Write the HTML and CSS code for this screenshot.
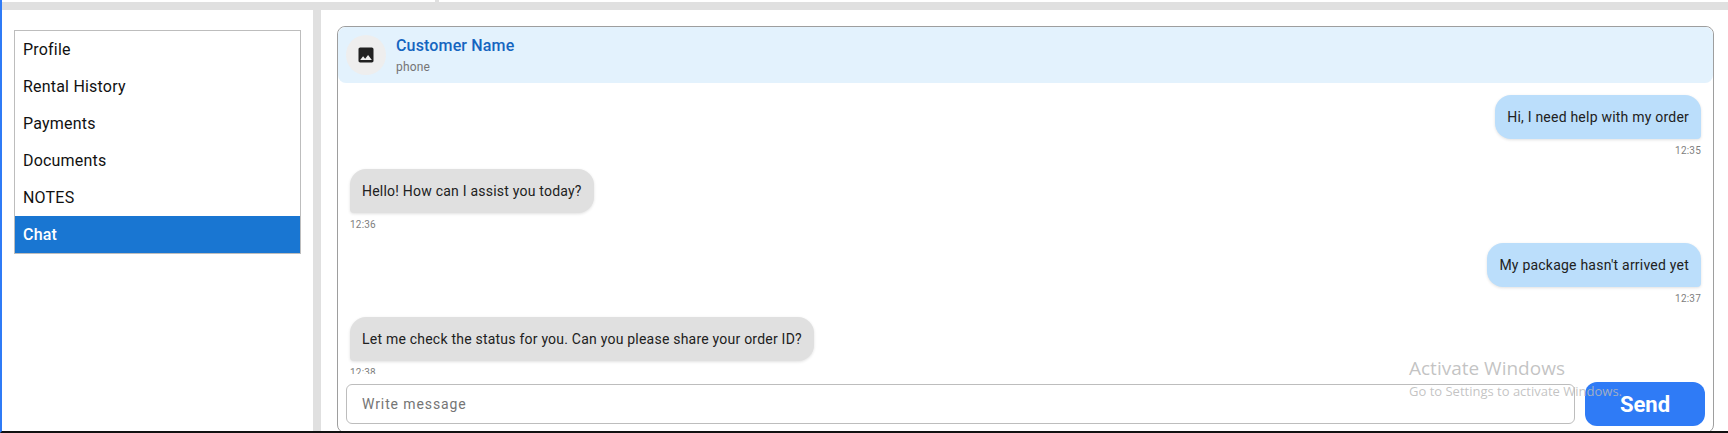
FILE: index.html
```html
<!DOCTYPE html>
<html lang="en">
<head>
<meta charset="utf-8">
<title>Customer Chat</title>
<link rel="stylesheet" href="styles.css">
</head>
<body>
<div class="frame">
  <div class="topstrip"><div class="tab-left"></div><div class="tab-right"></div></div>
  <div class="panels">
    <aside class="side">
      <ul class="menu">
        <li>Profile</li>
        <li>Rental History</li>
        <li>Payments</li>
        <li>Documents</li>
        <li>NOTES</li>
        <li class="active">Chat</li>
      </ul>
    </aside>
    <main class="main">
      <section class="card">
        <header class="head">
          <div class="avatar">
            <svg width="20" height="20" viewBox="0 0 24 24"><path fill="#212121" d="M21 19V5c0-1.100-.9-2-2-2H5c-1.100 0-2 .9-2 2v14c0 1.100.9 2 2 2h14c1.100 0 2-.9 2-2zM8.500 13.500l2.500 3.010L14.500 12l4.500 6H5l3.500-4.500z"/></svg>
          </div>
          <div class="who">
            <div class="name">Customer Name</div>
            <div class="phone">phone</div>
          </div>
        </header>
        <div class="thread">
          <div class="msg out"><div class="bubble">Hi, I need help with my order</div><div class="time">12:35</div></div>
          <div class="msg in"><div class="bubble">Hello! How can I assist you today?</div><div class="time">12:36</div></div>
          <div class="msg out"><div class="bubble">My package hasn't arrived yet</div><div class="time">12:37</div></div>
          <div class="msg in"><div class="bubble">Let me check the status for you. Can you please share your order ID?</div><div class="time">12:38</div></div>
        </div>
        <div class="composer">
          <div class="input">Write message</div>
          <button class="send">Send</button>
        </div>
      </section>
    </main>
  </div>
  <div class="watermark">
    <div class="wm-title">Activate Windows</div>
    <div class="wm-sub">Go to Settings to activate Windows.</div>
  </div>
</div>
</body>
</html>
```
FILE: styles.css
```css
* { box-sizing: border-box; }
html, body { margin: 0; padding: 0; height: 100%; overflow: hidden; background: #fff; }
body { font-family: Roboto, "Liberation Sans", sans-serif; color: #212121; }
.frame {
  position: relative;
  width: 1728px;
  height: 433px;
  display: flex;
  flex-direction: column;
  background: #e0e0e0;
  border-left: 2px solid #2f7bf6;
  border-bottom: 2px solid #111;
  overflow: hidden;
}
.topstrip { display: flex; height: 10px; flex: none; }
.tab-left { width: 433px; height: 2px; background: #fff; }
.tab-right { flex: 1; height: 2px; background: #fff; margin-left: 4px; }
.panels { flex: 1; display: flex; gap: 8px; min-height: 0; }
.side { width: 311px; flex: none; background: #fff; padding: 20px 12px; }
.menu {
  list-style: none;
  margin: 0;
  padding: 0;
  width: 287px;
  border: 1px solid #bdbdbd;
  font-size: 16px;
  letter-spacing: 0.2px;
}
.menu li { height: 37px; line-height: 37px; padding-left: 8px; color: #111; }
.menu li.active { background: #1976d2; color: #fff; font-weight: 500; }
.main { flex: 1; min-width: 0; background: #fff; padding: 16px 14px 0 16px; overflow: hidden; }
.card {
  height: 407px;
  display: flex;
  flex-direction: column;
  border: 1px solid #9e9e9e;
  border-radius: 8px;
}
.head {
  height: 56px;
  flex: none;
  display: flex;
  align-items: center;
  gap: 10px;
  padding-left: 8px;
  background: #e3f2fd;
  border-radius: 8px;
}
.avatar {
  width: 40px;
  height: 40px;
  border-radius: 50%;
  background: #eeeeee;
  display: flex;
  align-items: center;
  justify-content: center;
}
.name { font-size: 16px; font-weight: 500; color: #1565c0; line-height: 24px; letter-spacing: 0.15px; }
.phone { font-size: 12px; color: #757575; line-height: 18px; letter-spacing: 0.2px; }
.thread {
  flex: 1;
  min-height: 0;
  overflow: hidden;
  padding: 12px 12px 0;
  display: flex;
  flex-direction: column;
  gap: 11px;
}
.msg { display: flex; flex-direction: column; flex: none; }
.msg.out { align-items: flex-end; }
.msg.in { align-items: flex-start; }
.bubble {
  font-size: 14px;
  line-height: 20px;
  letter-spacing: 0.22px;
  padding: 12px;
  height: 44px;
  color: #212121;
  box-shadow: 0 1px 3px rgba(0,0,0,.12);
}
.out .bubble { background: #bbdefb; border-radius: 16px 16px 4px 16px; }
.in .bubble { background: #e0e0e0; border-radius: 16px 16px 16px 4px; }
.time { font-size: 10px; line-height: 15px; color: #808080; margin-top: 4px; letter-spacing: 0.2px; }
.composer { flex: none; display: flex; align-items: center; gap: 10px; padding: 8px 8px 6px; height: 58px; }
.input {
  flex: 1;
  height: 40px;
  border: 1px solid #bdbdbd;
  border-radius: 6px;
  padding-left: 15px;
  line-height: 38px;
  font-size: 14px;
  letter-spacing: 0.9px;
  color: #757575;
}
.send {
  width: 120px;
  height: 44px;
  border: none;
  border-radius: 12px;
  background: #2f7bf6;
  color: #fff;
  font: 700 22px Roboto, sans-serif;
}
.watermark {
  position: absolute;
  left: 1407px;
  top: 355px;
  font-family: "Open Sans", "Noto Sans", sans-serif;
  color: rgba(185,185,185,.85);
  pointer-events: none;
}
.wm-title { font-size: 19px; line-height: 26px; }
.wm-sub { font-size: 13px; line-height: 20px; }
```
